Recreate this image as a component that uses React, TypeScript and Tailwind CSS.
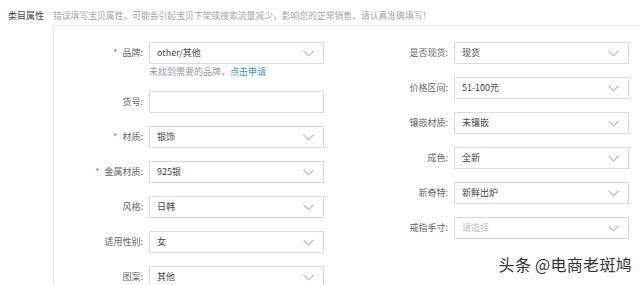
import React from "react"

const font = { fontFamily: '"Noto Sans CJK SC", "Noto Sans", sans-serif' }

function Chevron() {
  return (
    <svg width="11" height="7" viewBox="0 0 11 7" className="shrink-0">
      <polyline points="0.5,0.8 5.5,5.8 10.5,0.8" fill="none" stroke="#b5b5b5" strokeWidth="1.1" />
    </svg>
  )
}

interface FieldProps {
  label: string
  value?: string
  required?: boolean
  select?: boolean
  placeholder?: boolean
  labelWidth: string
}

function Field({ label, value, required, select = true, placeholder, labelWidth }: FieldProps) {
  return (
    <div className="flex items-center">
      <div className={`${labelWidth} shrink-0 text-right text-[9px] text-[#666] pr-[6px]`}>
        {required && <span className="text-[#f25c5c] mr-[5px]">*</span>}
        {label}:
      </div>
      <div className="w-[175px] h-[22px] border border-[#dcdcdc] bg-white flex items-center justify-between pl-[7px] pr-[9px]">
        <span className={`text-[9px] ${placeholder ? "text-[#bdbdbd]" : "text-[#444]"}`}>{value}</span>
        {select && <Chevron />}
      </div>
    </div>
  )
}

export default function App() {
  const left = "w-[95px]"
  const right = "w-[130px]"
  return (
    <div className="relative w-[640px] h-[285px] overflow-hidden bg-white" style={font}>
      {/* header */}
      <div className="flex items-center h-[25px] pt-[6px]">
        <div className="w-[53px] pl-[8px] text-[9px] text-[#444]">类目属性</div>
        <div className="text-[8.8px] text-[#a6a6a6]">
          错误填写宝贝属性，可能会引起宝贝下架或搜索流量减少，影响您的正常销售，请认真准确填写！
        </div>
      </div>

      {/* panel */}
      <div className="ml-[53px] border-l border-t border-[#ececec] flex pt-[16px] h-[260px]">
        {/* left column */}
        <div className="flex flex-col">
          <Field labelWidth={left} label="品牌" value="other/其他" required />
          <div className="ml-[95px] mt-[2px] h-[12px] text-[9px] leading-[12px] text-[#999]">
            未找到需要的品牌，<span className="text-[#3a8ee6]">点击申请</span>
          </div>
          <div className="flex flex-col gap-[13px] mt-[13px]">
            <Field labelWidth={left} label="货号" select={false} />
            <Field labelWidth={left} label="材质" value="银饰" required />
            <Field labelWidth={left} label="金属材质" value="925银" required />
            <Field labelWidth={left} label="风格" value="日韩" />
            <Field labelWidth={left} label="适用性别" value="女" />
            <Field labelWidth={left} label="图案" value="其他" />
          </div>
        </div>

        {/* right column */}
        <div className="flex flex-col gap-[13px]">
          <Field labelWidth={right} label="是否现货" value="现货" />
          <Field labelWidth={right} label="价格区间" value="51-100元" />
          <Field labelWidth={right} label="镶嵌材质" value="未镶嵌" />
          <Field labelWidth={right} label="成色" value="全新" />
          <Field labelWidth={right} label="新奇特" value="新鲜出炉" />
          <Field labelWidth={right} label="戒指手寸" value="请选择" placeholder />
        </div>
      </div>

      {/* watermark */}
      <div className="absolute right-[2px] bottom-[8px] px-[6px] py-[1px] bg-white/70 rounded-sm">
        <span className="text-[16px] text-[#333] tracking-[0.3px]" style={{ textShadow: "0 0 2px #fff" }}>
          头条 @电商老斑鸠
        </span>
      </div>
    </div>
  )
}
